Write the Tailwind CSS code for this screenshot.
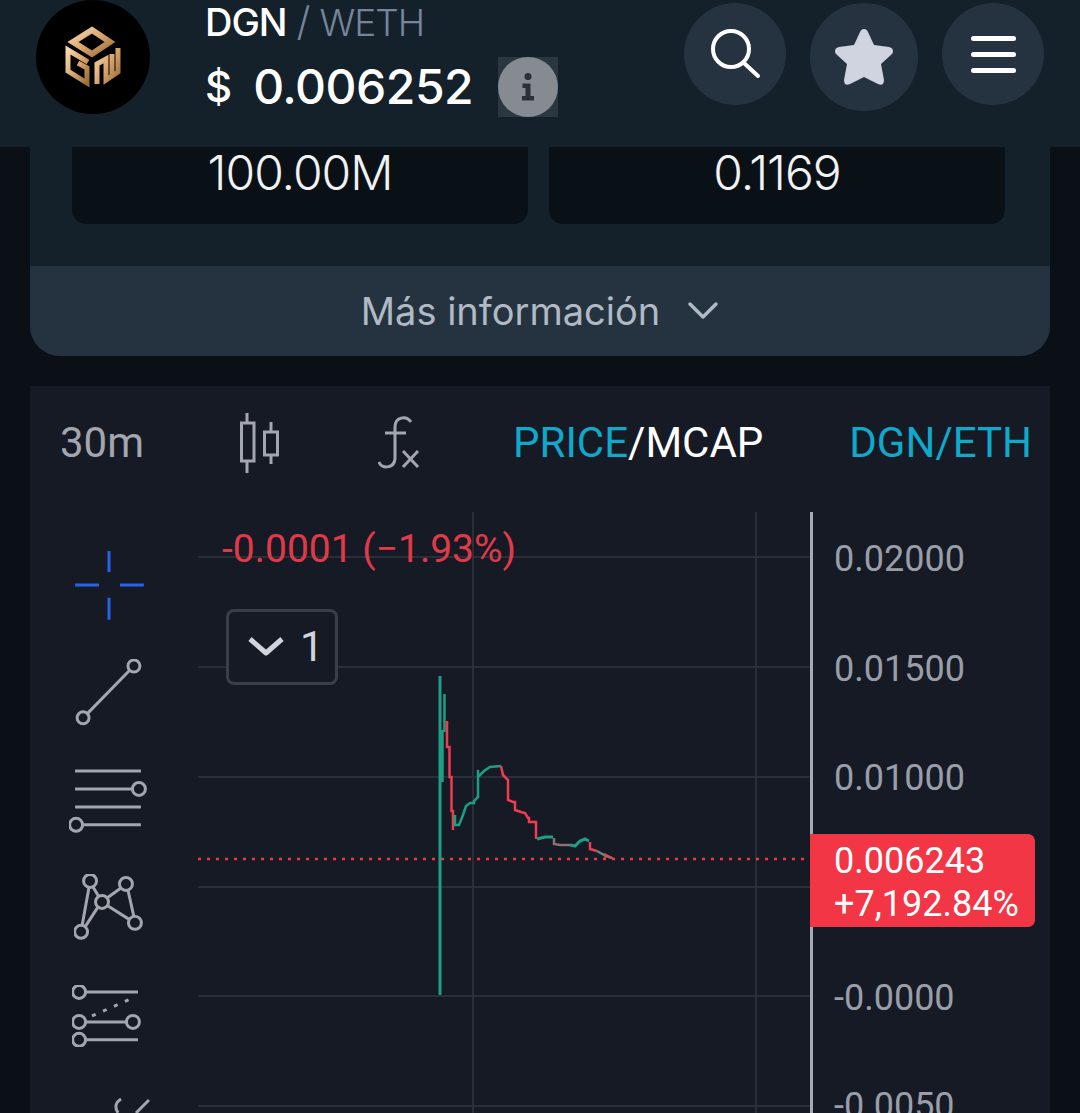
<!DOCTYPE html>
<html lang="es">
<head>
  <meta charset="UTF-8">
  <title>DGN / WETH</title>
  <script src="https://cdn.jsdelivr.net/npm/@tailwindcss/browser@4"></script>
</head>
<body class="bg-[#0a1015] font-['Inter',sans-serif] text-white">
  <div class="w-[1080px] h-[1113px] overflow-hidden">

    <!-- header -->
    <header class="h-[147px] bg-[#14202a] flex relative">
      <div class="w-[114px] h-[114px] ml-[36px] rounded-full bg-black shrink-0 flex items-center justify-center">
        <svg width="114" height="114" viewBox="36 0 114 114" fill="none" stroke="url(#gold)" stroke-width="5">
          <defs>
            <linearGradient id="gold" x1="0" y1="0" x2="1" y2="1">
              <stop offset="0" stop-color="#f6d6ac"/>
              <stop offset="0.5" stop-color="#d9a56c"/>
              <stop offset="1" stop-color="#9a6b38"/>
            </linearGradient>
          </defs>
          <path d="M92 30 L110 42 L92 54 L73 42 Z" stroke-width="6"/>
          <path d="M88 62 L68 50 V71 L87 83 V68 L78 63"/>
          <path d="M97 84 V64 L106 59 V80 L118 72 V48 M112 54 V76"/>
        </svg>
      </div>
      <div class="ml-[55px] flex flex-col">
        <div class="flex items-center h-[44px] text-[38px] leading-none">
          <span class="font-medium tracking-[-1px]">DGN</span>
          <span class="ml-[10px] font-light text-[#76859b] text-[40px] leading-none">/</span>
          <span class="ml-[9px] font-light text-[#76859b] text-[37px] tracking-[-1px]">WETH</span>
        </div>
        <div class="flex items-center h-[60px] mt-[13px] text-[48px] font-medium leading-none">
          <span class="text-[42px]">$</span>
          <span class="ml-[21px] tracking-[-0.5px]">0.006252</span>
          <span class="ml-[25px] w-[60px] h-[60px] bg-[#2a3640] flex items-center justify-center">
            <svg width="60" height="60" viewBox="0 0 60 60">
              <circle cx="30" cy="30" r="30" fill="#868b92"/>
              <circle cx="30" cy="19.5" r="3.5" fill="#2a3139"/>
              <path d="M24.5 26.5 H32.5 V39 H36 V43.5 H24 V39 H27.5 V31 H24.5 Z" fill="#2a3139"/>
            </svg>
          </span>
        </div>
      </div>
      <div class="ml-auto mr-[36px] flex items-start gap-[24px] pt-[3px]">
        <button class="w-[102px] h-[102px] rounded-full bg-[#253340] flex items-center justify-center">
          <svg width="60" height="60" viewBox="0 0 60 60" fill="none" stroke="white" stroke-width="4" stroke-linecap="round">
            <circle cx="26" cy="25" r="18"/>
            <path d="M39 39 L53 52"/>
          </svg>
        </button>
        <button class="w-[108px] h-[108px] rounded-full bg-[#253340] flex items-center justify-center">
          <svg width="64" height="62" viewBox="0 0 64 62">
            <path d="M32 3 C34 3 35 4 36 6 L42 19 L57 21 C61 22 62 25 60 28 L49 38 L52 54 C52 58 50 60 46 58 L32 51 L18 58 C14 60 12 58 12 54 L15 38 L4 28 C2 25 3 22 7 21 L22 19 L28 6 C29 4 30 3 32 3 Z" fill="#d0d4e0"/>
          </svg>
        </button>
        <button class="w-[102px] h-[102px] rounded-full bg-[#253340] flex flex-col items-center justify-center gap-[11px]">
          <span class="w-[45px] h-[5px] rounded-full bg-white"></span>
          <span class="w-[45px] h-[5px] rounded-full bg-white"></span>
          <span class="w-[45px] h-[5px] rounded-full bg-white"></span>
        </button>
      </div>
    </header>

    <!-- token info card -->
    <section class="mx-[30px] h-[209px] bg-[#14202a] rounded-b-[30px] overflow-hidden flex flex-col">
      <div class="h-[119px] pl-[42px] pr-[45px] flex gap-[21px] items-start">
        <div class="flex-1 h-[77px] pb-[25px] bg-[#0a1116] rounded-b-[14px] flex items-center justify-center text-[48px] leading-none text-[#f1f2f3] font-light tracking-[-1px]">100.00M</div>
        <div class="flex-1 h-[77px] pb-[25px] bg-[#0a1116] rounded-b-[14px] flex items-center justify-center text-[48px] leading-none text-[#f1f2f3] font-light tracking-[-1px]">0.1169</div>
      </div>
      <div class="h-[90px] bg-[#253340] flex items-center justify-center gap-[27px] text-[#b0b9c4] text-[38px]">
        <span>Más información</span>
        <svg width="32" height="20" viewBox="0 0 32 20" fill="none" stroke="#b0b9c4" stroke-width="3.5" stroke-linecap="round" stroke-linejoin="round">
          <path d="M3 3 L16 16 L29 3"/>
        </svg>
      </div>
    </section>

    <!-- chart widget -->
    <section class="mx-[30px] mt-[30px] h-[727px] bg-[#161a25] font-['Roboto',sans-serif] overflow-hidden">
      <div class="h-[126px] pb-[12px] flex items-center text-[42px] leading-none">
        <span class="ml-[30px] text-[#a3a6af]">30m</span>
        <svg class="ml-[96px]" width="40" height="62" viewBox="0 0 40 62" fill="none" stroke="#a3a6af" stroke-width="3">
          <path d="M7 1 V11 M7 49 V61 M31 10 V20 M31 43 V52"/>
          <rect x="1.5" y="11" width="12.5" height="38"/>
          <rect x="24.5" y="20" width="13" height="23"/>
        </svg>
        <svg class="ml-[98px]" width="44" height="56" viewBox="0 0 44 56" fill="none" stroke="#a3a6af" stroke-width="3">
          <path d="M1 47 C3 54 16 54 17 44 V12 C17 2 28 0 33 7"/>
          <path d="M7 18 H28"/>
          <path d="M25 36 L40 52 M40 36 L25 52"/>
        </svg>
        <span class="ml-[91px] text-[#0fa9cb]">PRICE<span class="text-white">/MCAP</span></span>
        <span class="ml-[86px] text-[#0fa9cb]">DGN/ETH</span>
      </div>

      <div class="flex h-[601px]">
        <!-- drawing tools -->
        <div class="w-[168px] shrink-0 flex flex-col items-start" >
          <svg class="mt-[39px] ml-[45px]" width="69" height="69" viewBox="75 551 69 69" fill="none" stroke="#2962e8" stroke-width="3">
            <path d="M109 551 V572 M109 598 V620 M75 585 H99 M120 585 H144"/>
          </svg>
          <svg class="mt-[39px] ml-[45px]" width="68" height="68" viewBox="75 659 68 68" fill="none" stroke="#a3a6af" stroke-width="3">
            <circle cx="83" cy="718" r="6"/><circle cx="134" cy="666" r="6"/>
            <path d="M87 714 L130 670"/>
          </svg>
          <svg class="mt-[42px] ml-[39px]" width="80" height="66" viewBox="69 769 80 66" fill="none" stroke="#a3a6af" stroke-width="3">
            <path d="M75 771 H141 M75 789 H133 M75 807 H141 M82 825 H141"/>
            <circle cx="139" cy="789" r="6.5"/><circle cx="76" cy="825" r="6.5"/>
          </svg>
          <svg class="mt-[40px] ml-[44px]" width="70" height="66" viewBox="75 875 70 66" fill="none" stroke="#a3a6af" stroke-width="3">
            <circle cx="91" cy="882" r="6.5"/><circle cx="127" cy="885" r="6.5"/><circle cx="103" cy="903" r="6.5"/><circle cx="136" cy="924" r="6.5"/><circle cx="82" cy="933" r="6.5"/>
            <path d="M90 888 L83 927 M94 888 L100 898 M108 899 L122 889 M129 891 L135 918 M109 907 L131 921 M99 908 L86 928"/>
          </svg>
          <svg class="mt-[45px] ml-[42px]" width="70" height="62" viewBox="72 986 70 62" fill="none" stroke="#a3a6af" stroke-width="3">
            <circle cx="79" cy="993" r="6.5"/><circle cx="79" cy="1023" r="6.5"/><circle cx="133" cy="1023" r="6.5"/><circle cx="79" cy="1041" r="6.5"/>
            <path d="M86 993 H138 M86 1023 H127 M86 1041 H138"/>
            <path d="M92 1017 L133 999" stroke-dasharray="4 8"/>
          </svg>
          <svg class="mt-[50px] ml-[80px]" width="40" height="16" viewBox="110 1098 40 16" fill="none" stroke="#a3a6af" stroke-width="3">
            <path d="M121 1100 C116 1103 114 1108 118 1114 M136 1114 L149 1101"/>
          </svg>
        </div>

        <div class="relative flex-1">
          <svg class="absolute left-0 top-0" width="612" height="601" viewBox="198 512 612 601" fill="none">
            <path d="M198 557 H810 M198 667 H810 M198 777 H810 M198 887 H810 M198 996 H810 M198 1106 H810 M473 512 V1113 M756 512 V1113" stroke="#2a2e39" stroke-width="2"/>
            <path d="M198 859 H810" stroke="#f23645" stroke-width="2.5" stroke-dasharray="3 6"/>
            <path d="M440 676 V995" stroke="#1f9e86" stroke-width="3"/>
            <path d="M441.5 730 V782" stroke="#1f9e86" stroke-width="4.5"/>
            <path d="M444.5 694 V732" stroke="#1f9e86" stroke-width="2.5"/>
            <path d="M447 721 V747 H449.5 V777 H451.5 V811 H453 V830" stroke="#ee3d50" stroke-width="2.5"/>
            <path d="M455 815 V825 H459 L463 815 L466 806 L470 803 H474 V801 L478 797 V770 V777 L484 771 L490 767 L501 766" stroke="#1f9e86" stroke-width="2.5"/>
            <path d="M501 766 L503 775 L508 780 V800 L513 802 H515 V810 L521 812 L525 813 L528 818 H529 V822 H536 V839" stroke="#ee3d50" stroke-width="2.5"/>
            <path d="M537 839 L545 837 L553 837" stroke="#1f9e86" stroke-width="3"/>
            <path d="M554 838 V844 L560 845 L570 845" stroke="#8b6f76" stroke-width="2.5"/>
            <path d="M570 845 L575 846 L580 841 L585 839 L589 841" stroke="#1f9e86" stroke-width="3"/>
            <path d="M590 842 V849 L597 851" stroke="#ee3d50" stroke-width="2.5"/>
            <path d="M597 851 L606 856 L612 858" stroke="#5c8b80" stroke-width="2.5"/>
            <path d="M605 858 V854 L614 859" stroke="#ee3d50" stroke-width="1.5"/>
          </svg>
          <div class="absolute left-[24px] top-[15px] text-[39px] leading-[44px] text-[#e03a49] whitespace-nowrap">-0.0001 (−1.93%)</div>
          <div class="absolute left-[28px] top-[97px] w-[112px] h-[76px] border-[3px] border-[#3a3e49] rounded-[8px] flex items-center bg-[#161a25]">
            <svg class="ml-[18px]" width="38" height="22" viewBox="0 0 38 22" fill="none" stroke="#d1d4dc" stroke-width="5" stroke-linejoin="round">
              <path d="M3 3 L19 17 L35 3"/>
            </svg>
            <span class="ml-[15px] text-[42px] leading-none text-[#d1d4dc]">1</span>
          </div>
        </div>

        <!-- price axis -->
        <div class="w-[240px] shrink-0 relative border-l-[3px] border-[#a7aab3] text-[36px] leading-[44px] text-[#9a9ea8]">
          <div class="absolute left-[21px] top-[25px]">0.02000</div>
          <div class="absolute left-[21px] top-[135px]">0.01500</div>
          <div class="absolute left-[21px] top-[244px]">0.01000</div>
          <div class="absolute left-[21px] top-[464px]">-0.0000</div>
          <div class="absolute left-[21px] top-[572px]">-0.0050</div>
          <div class="absolute left-[-3px] top-[322px] w-[225px] h-[93px] bg-[#f23645] rounded-r-[7px] pl-[24px] pt-[6px] text-white leading-[43px]">
            <div>0.006243</div>
            <div class="whitespace-nowrap">+7,192.84%</div>
          </div>
        </div>
      </div>
    </section>
  </div>
</body>
</html>
